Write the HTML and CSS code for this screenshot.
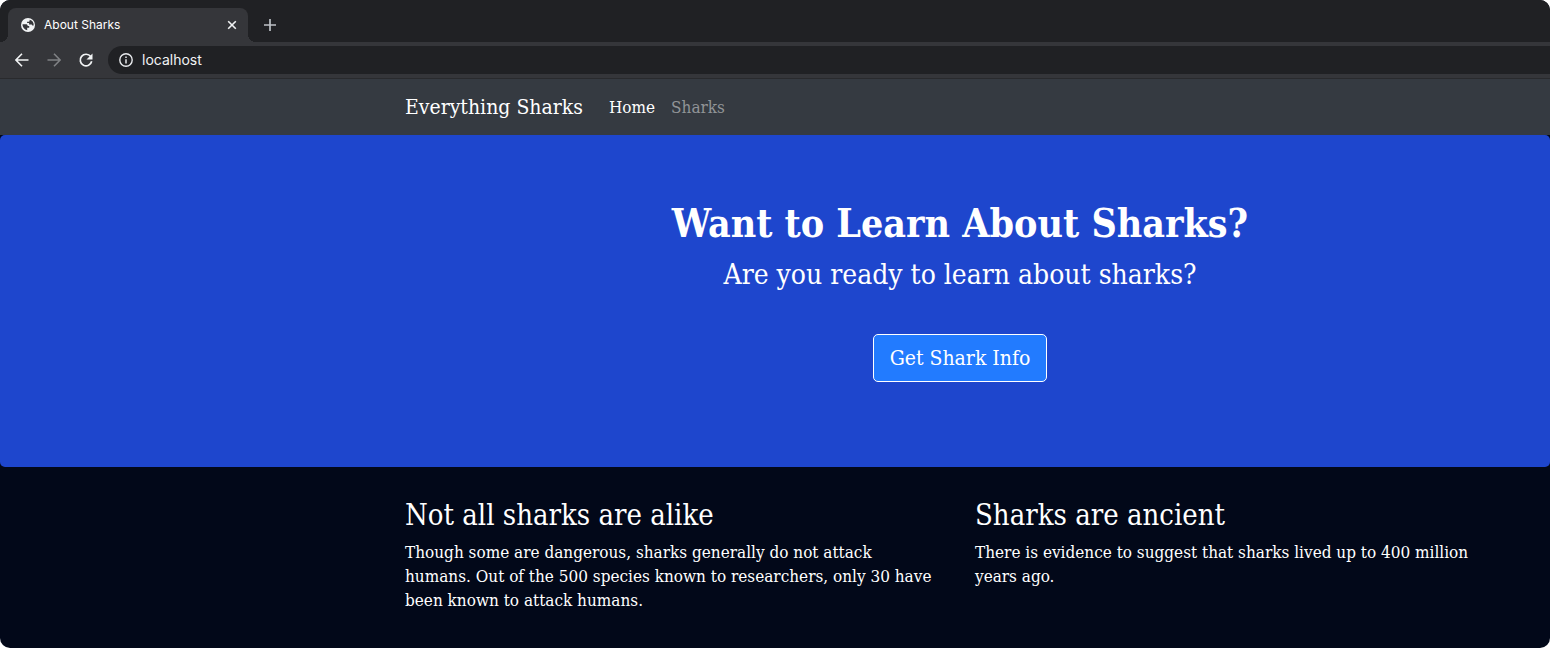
FILE: index.html
```html
<!DOCTYPE html>
<html lang="en">
<head>
<meta charset="utf-8">
<meta name="viewport" content="width=device-width, initial-scale=1">
<title>About Sharks</title>
<link rel="stylesheet" href="styles.css">
</head>
<body>
<div class="window">
  <div class="tab-strip">
    <div class="tab">
      <svg class="globe" viewBox="0 0 14 14" width="14" height="14" aria-hidden="true"><circle cx="7" cy="7" r="7" fill="#f1f3f4"/><path d="M1.5 6.200h3.300c1.200 0 1.900.7 1.900 1.700h1.500v1.900H6.200v2.400A5.600 5.600 0 0 1 1.500 6.200zM8.600 1.700v1.100c0 .7-.6 1-1.300 1H6.100v1.300h2v1.300h2.100c.6 0 1 .4 1 1h1.500A5.600 5.600 0 0 0 8.600 1.700z" fill="#35363a"/></svg>
      <span class="tab-title">About Sharks</span>
      <button class="icon-button" type="button" aria-label="Close tab"><svg viewBox="0 0 16 16" width="16" height="16"><path d="m4.200 4.200 7.600 7.600m0-7.600-7.600 7.600" fill="none" stroke="#f1f3f4" stroke-width="1.600"/></svg></button>
    </div>
    <button class="icon-button" type="button" aria-label="New tab"><svg viewBox="0 0 16 16" width="16" height="16"><path d="M8 2v12M2 8h12" fill="none" stroke="#bdc1c6" stroke-width="1.700"/></svg></button>
  </div>
  <div class="toolbar">
    <button class="icon-button" type="button" aria-label="Back"><svg viewBox="0 0 16 16" width="16" height="16"><path d="M14.500 8H2.200M8 1.800 1.900 8 8 14.200" fill="none" stroke="#f1f3f4" stroke-width="1.600"/></svg></button>
    <button class="icon-button" type="button" aria-label="Forward"><svg viewBox="0 0 16 16" width="16" height="16"><path d="M1.500 8h12.300M8 1.800 14.100 8 8 14.200" fill="none" stroke="#7f8184" stroke-width="1.600"/></svg></button>
    <button class="icon-button" type="button" aria-label="Reload"><svg viewBox="0 0 16 16" width="16" height="16"><path d="M12.700 4.600A5.800 5.800 0 1 0 13.700 9.300" fill="none" stroke="#f1f3f4" stroke-width="1.700"/><path d="M14.500 1.500v6h-6z" fill="#f1f3f4"/></svg></button>
    <label class="address">
      <svg viewBox="0 0 14 14" width="14" height="14" aria-hidden="true"><circle cx="7" cy="7" r="6.200" fill="none" stroke="#e8eaed" stroke-width="1.400"/><path d="M7 6.200v4.200M7 3.500v1.500" stroke="#e8eaed" stroke-width="1.500"/></svg>
      <input type="text" value="localhost" aria-label="Address">
    </label>
  </div>
  <nav class="navbar">
    <a class="brand" href="#">Everything Sharks</a>
    <a class="nav-link active" href="#">Home</a>
    <a class="nav-link" href="#sharks">Sharks</a>
  </nav>
  <main>
    <section class="hero">
      <h1>Want to Learn About Sharks?</h1>
      <p>Are you ready to learn about sharks?</p>
      <a class="cta" href="#sharks">Get Shark Info</a>
    </section>
    <section class="facts" id="sharks">
      <article>
        <h2>Not all sharks are alike</h2>
        <p>Though some are dangerous, sharks generally do not attack humans. Out of the 500 species known to researchers, only 30 have been known to attack humans.</p>
      </article>
      <article>
        <h2>Sharks are ancient</h2>
        <p>There is evidence to suggest that sharks lived up to 400 million years ago.</p>
      </article>
    </section>
  </main>
</div>
</body>
</html>
```

FILE: styles.css
```css
* { box-sizing: border-box; }

body {
  margin: 0;
  background: #fff;
  color: #fff;
  font: 17px/24px "DejaVu Serif Condensed", "DejaVu Serif", serif;
}

h1, h2, p { margin: 0; }
a { color: inherit; text-decoration: none; }

.window {
  min-height: 100vh;
  border-radius: 10px;
  overflow: hidden;
  background: #020819;
}

/* Browser chrome */
.tab-strip,
.toolbar {
  display: flex;
  align-items: center;
  font-family: Inter, sans-serif;
}

.tab-strip {
  height: 42px;
  padding: 8px 8px 0;
  gap: 14px;
  background: #202124;
}

.tab {
  position: relative;
  display: flex;
  align-items: center;
  width: 240px;
  height: 34px;
  padding: 0 8px 0 13px;
  gap: 9px;
  border-radius: 8px 8px 0 0;
  background: #35363a;
}

.tab::before,
.tab::after {
  content: "";
  position: absolute;
  bottom: 0;
  width: 8px;
  height: 8px;
}

.tab::before {
  right: 100%;
  background: radial-gradient(circle at 0 0, #202124 8px, #35363a 8px);
}

.tab::after {
  left: 100%;
  background: radial-gradient(circle at 100% 0, #202124 8px, #35363a 8px);
}

.tab-title {
  flex: 1;
  font-size: 12px;
}

.icon-button {
  display: flex;
  padding: 0;
  border: 0;
  background: none;
}

.toolbar {
  height: 37px;
  padding-left: 14px;
  gap: 16px;
  border-bottom: 1px solid #292a2d;
  background: #35363a;
}

.address {
  display: flex;
  flex: 1;
  align-items: center;
  height: 28px;
  margin-left: -2px;
  padding-left: 11px;
  gap: 9px;
  border-radius: 14px 0 0 14px;
  background: #202124;
}

.address input {
  flex: 1;
  padding: 0;
  border: 0;
  outline: 0;
  background: none;
  color: #f1f3f4;
  font: 14px/20px Inter, sans-serif;
}

/* Page */
.navbar {
  display: flex;
  align-items: center;
  height: 56px;
  padding: 0 35px 0 405px;
  gap: 16px;
  background: #353a41;
}

.brand {
  margin-right: 10px;
  font-size: 21px;
}

.nav-link { color: #919497; }
.nav-link.active { color: #fff; }

.hero {
  display: flex;
  flex-direction: column;
  align-items: center;
  padding: 64px 20px 85px 390px;
  border-radius: 5px;
  background: #1e46cd;
  text-align: center;
}

.hero h1 {
  font-size: 39px;
  line-height: 48px;
}

.hero p {
  margin: 8px 0 39px;
  font-size: 28px;
  line-height: 40px;
}

.cta {
  padding: 8px 16px;
  border: 1px solid #fff;
  border-radius: 5px;
  background: #227bff;
  font-size: 21px;
  line-height: 30px;
}

.facts {
  display: grid;
  grid-template-columns: 1fr 1fr;
  gap: 30px;
  padding: 31px 35px 35px 405px;
}

.facts article { padding-right: 12px; }

.facts h2 {
  margin-bottom: 8px;
  font-size: 29px;
  font-weight: 400;
  line-height: 34px;
}
```
